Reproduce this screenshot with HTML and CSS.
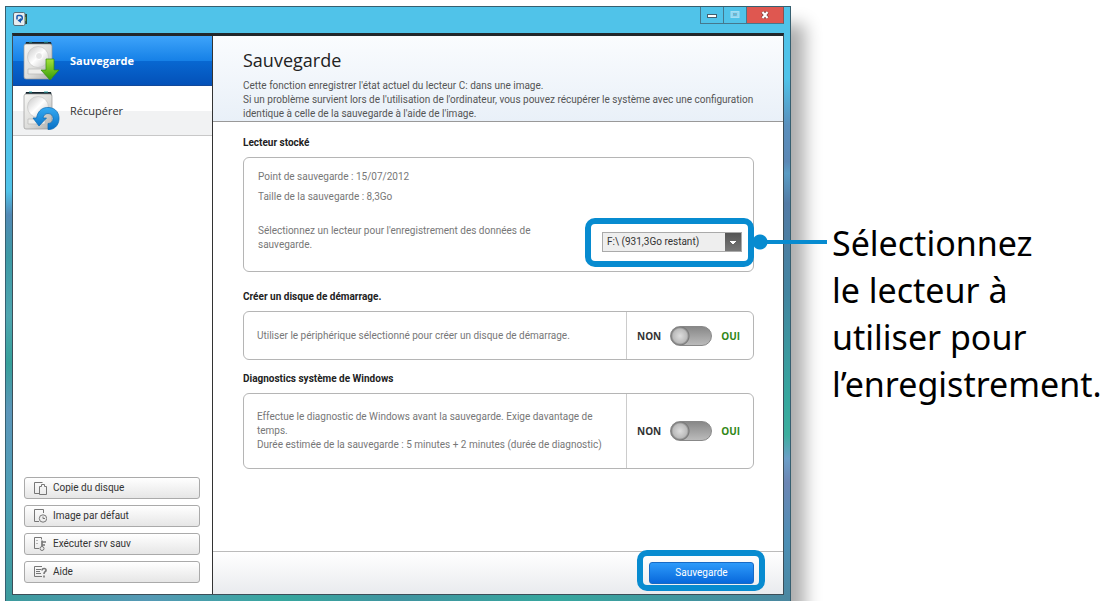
FILE: index.html
```html
<!DOCTYPE html>
<html lang="fr">
<head>
<meta charset="utf-8">
<title>Sauvegarde</title>
<link rel="stylesheet" href="styles.css">
</head>
<body>
<main class="page">
  <section class="window">
    <header class="titlebar">
      <svg class="app-icon" viewBox="0 0 15 15" aria-hidden="true">
        <rect x="12" y="2" width="2" height="10" fill="#2d4b3a"/><path d="M12.500 5v4" stroke="#8bd12f"/>
        <rect x=".5" y=".5" width="11.500" height="13" rx="1.500" fill="#e8edf0" stroke="#58707c"/>
        <path d="M4 7.500V4.500q0-1 1-1h2c3 0 3 4.500.3 5" fill="none" stroke="#1557ae" stroke-width="1.500"/><path d="M8 6v5L4.500 8.500z" fill="#1557ae"/>
      </svg>
      <div class="window-controls">
        <button class="control" aria-label="Réduire"><svg viewBox="0 0 12 12"><rect x="1.500" y="5.500" width="9" height="3" fill="#fff" stroke="#45606e"/></svg></button>
        <button class="control maximize" aria-label="Agrandir" disabled><svg viewBox="0 0 12 12"><rect x="2" y="2.500" width="8" height="6" fill="#8ed8f3" stroke="#a6def2"/><rect x="4.500" y="4.500" width="3" height="2" fill="#54bde5" stroke="#79a8bd" stroke-width=".7"/></svg></button>
        <button class="control close" aria-label="Fermer"><svg viewBox="0 0 12 12"><path d="M3.500 3l5 6M8.500 3l-5 6" stroke="#6b3835" stroke-width="3.500"/><path d="M3.500 3l5 6M8.500 3l-5 6" stroke="#fff" stroke-width="2.200"/></svg></button>
      </div>
    </header>
    <div class="client">
      <aside class="sidebar">
        <nav>
          <a class="nav-item active" href="#sauvegarde">
            <svg class="drive" viewBox="0 0 37 40" aria-hidden="true">
              <defs>
                <linearGradient id="metal" x1="0" y1="0" x2="1" y2="1"><stop stop-color="#f7f7f5"/><stop offset=".55" stop-color="#dcdcda"/><stop offset="1" stop-color="#adadab"/></linearGradient>
                <linearGradient id="disk" x1="0" y1="0" x2="1" y2="1"><stop stop-color="#c6c6c6"/><stop offset=".5" stop-color="#fff"/><stop offset="1" stop-color="#c4c4c4"/></linearGradient>
                <linearGradient id="green" x2="0" y2="1"><stop stop-color="#a5e23b"/><stop offset="1" stop-color="#359b08"/></linearGradient>
                <linearGradient id="blue" x2="0" y2="1"><stop stop-color="#35aaf2"/><stop offset="1" stop-color="#0870c5"/></linearGradient>
              </defs>
              <path d="M3 1h25l1 4H2z" fill="#15252f"/><path d="M6 1h3m12 0h4" stroke="#31a5a7"/>
              <rect x="1" y="3" width="28" height="35" rx="2" fill="url(#metal)" stroke="#989998" stroke-width=".7"/>
              <circle cx="15" cy="16" r="10.500" fill="url(#disk)" stroke="#c5c5c4" stroke-width=".7"/><circle cx="16" cy="15" r="3.500" fill="#e4e4e4" stroke="#fff"/>
              <path d="M5 28h17v5H5z" fill="#ededeb" stroke="#b9b9b8" stroke-width=".7"/>
              <path d="M23 18h8v11h5l-9 10-9-10h5z" fill="url(#green)" stroke="#318b0b" stroke-width=".7"/>
            </svg>
            <span>Sauvegarde</span>
          </a>
          <a class="nav-item" href="#recuperer">
            <svg class="drive" viewBox="0 0 37 40" aria-hidden="true">
              <path d="M3 1h25l1 4H2z" fill="#15252f"/><path d="M6 1h3m12 0h4" stroke="#31a5a7"/>
              <rect x="1" y="3" width="28" height="35" rx="2" fill="url(#metal)" stroke="#989998" stroke-width=".7"/>
              <circle cx="15" cy="16" r="10.500" fill="url(#disk)" stroke="#c5c5c4" stroke-width=".7"/>
              <path d="M5 28h17v5H5z" fill="#ededeb" stroke="#b9b9b8" stroke-width=".7"/>
              <path d="M10 27h3.500C15 19 20 16 26 16.500c7 .5 10.500 6 10 12-.5 6-5 10.500-11 10v-6c3 0 5-2 5-5s-2-5-5-5c-3 0-4.500 2-5 4.500h3.500L16 35z" fill="url(#blue)" stroke="#0869b1" stroke-width=".7"/>
            </svg>
            <span>Récupérer</span>
          </a>
        </nav>
        <div class="tools">
          <button class="tool"><svg viewBox="0 0 13 14"><path d="M5 12.500H.5V1.500h8M5.500 5.500h2v-2h3v2h2v8h-7z"/></svg>Copie du disque</button>
          <button class="tool"><svg viewBox="0 0 13 14"><path d="M5 12.500H.5V.5h9V4"/><circle cx="9" cy="9.500" r="3.700"/><path d="M9 7.500v2h2"/></svg>Image par défaut</button>
          <button class="tool"><svg viewBox="0 0 13 14"><path d="M5 11.500H.5V.5h7v2M2.500 3.500h1m-1 3h1"/><circle cx="8" cy="11.500" r="2"/><path d="M8 9.500v-6M8 5h4m-4 3h3" stroke-width="1.700"/></svg>Exécuter srv sauv</button>
          <button class="tool"><svg viewBox="0 0 13 14"><path d="M8 1.500H.5v10H8M2 4.500h5m-5 2h4m-4 2h5"/><path d="M8 5.500c0-3 4.500-2.500 4 0-.3 1.500-2 1-2 3.500M10 10.500v2" stroke-width="1.600"/></svg>Aide</button>
        </div>
      </aside>
      <div class="content">
        <header class="intro">
          <h1>Sauvegarde</h1>
          <p>Cette fonction enregistrer l'état actuel du lecteur C: dans une image.<br>Si un problème survient lors de l'utilisation de l'ordinateur, vous pouvez récupérer le système avec une configuration<br>identique à celle de la sauvegarde à l'aide de l'image.</p>
        </header>
        <div class="settings">
          <section>
            <h2>Lecteur stocké</h2>
            <div class="card drive-card">
              <p>Point de sauvegarde : 15/07/2012</p>
              <p>Taille de la sauvegarde : 8,3Go</p>
              <div class="drive-row">
                <label for="drive">Sélectionnez un lecteur pour l'enregistrement des données de<br>sauvegarde.</label>
                <div class="select-wrap"><select id="drive"><option>F:\ (931,3Go restant)</option></select></div>
              </div>
            </div>
          </section>
          <section>
            <h2>Créer un disque de démarrage.</h2>
            <div class="card option-card">
              <p>Utiliser le périphérique sélectionné pour créer un disque de démarrage.</p>
              <label class="switch"><span>NON</span><input type="checkbox" role="switch" aria-label="Créer un disque de démarrage"><span class="yes">OUI</span></label>
            </div>
          </section>
          <section>
            <h2>Diagnostics système de Windows</h2>
            <div class="card option-card tall">
              <p>Effectue le diagnostic de Windows avant la sauvegarde. Exige davantage de<br>temps.<br>Durée estimée de la sauvegarde : 5 minutes + 2 minutes (durée de diagnostic)</p>
              <label class="switch"><span>NON</span><input type="checkbox" role="switch" aria-label="Diagnostics système de Windows"><span class="yes">OUI</span></label>
            </div>
          </section>
        </div>
        <footer class="actions"><div class="save-wrap"><button class="save">Sauvegarde</button></div></footer>
      </div>
    </div>
  </section>
  <aside class="caption">Sélectionnez<br>le lecteur à<br>utiliser pour<br>l’enregistrement.</aside>
</main>
</body>
</html>
```
FILE: styles.css
```css
* { box-sizing: border-box; }
body {
  margin: 0;
  background: #fff;
  color: #222;
  font: 10px/14px Roboto, "Open Sans", sans-serif;
}
h1, h2, p { margin: 0; font-weight: 400; }
button, select { font: inherit; color: inherit; }
.page {
  display: grid;
  grid-template-columns: minmax(0, 1fr) 272px;
  gap: 41px;
  min-height: 100vh;
  padding: 6px 0 0 5px;
  overflow: hidden;
}
.window {
  display: flex;
  flex-direction: column;
  padding: 0 6px 6px;
  border: 1px solid #365f70;
  border-bottom: 0;
  background:
    linear-gradient(90deg, #3c9b9d, #5599b5 18%, #36a79e 35%, #4094a0 50%, #36a79e 70%, #4b87a0) bottom / 100% 6px no-repeat,
    linear-gradient(#50c3e9 31%, #5289b5 35%, #3d9aa5 42%, #4fa6b0 52%, #36a09a 60%, #5c96ba 68%, #4d9fb5 82%, #3c9b9d) left / 6px 100% no-repeat,
    linear-gradient(#50c3e9 12%, #5a8fbc 20%, #5c88b5 26%, #5a9cc4 28%, #537ba5 33%, #4384a0 48%, #36a79e 66%, #3dae9e 72%, #6c9fc8 76%, #6c86b4 80%, #4d8fb5 90%, #4b87a0) right / 6px 100% no-repeat,
    #50c3e9;
  box-shadow: 14px 18px 16px rgba(0, 0, 0, .32);
}
.titlebar { display: flex; justify-content: space-between; height: 26px; background: #50c3e9; }
.app-icon { width: 15px; height: 15px; margin: 5px 0 0 1px; }
.window-controls { display: flex; height: 17px; }
.control {
  display: grid;
  place-items: center;
  width: 23px;
  padding: 0;
  border: 1px solid #45788d;
  border-top: 0;
  border-right: 0;
  background: transparent;
}
.control svg { width: 12px; height: 12px; }
.close { width: 38px; border-right: 1px solid #8b5050; background: #df5750; }
.client {
  display: grid;
  grid-template-columns: 200px minmax(0, 1fr);
  flex: 1;
  border: 1px solid #3c4e58;
  border-top: 3px solid #22272b;
  background: #fff;
}
.sidebar {
  display: flex;
  flex-direction: column;
  justify-content: space-between;
  border-right: 1px solid #333;
}
.nav-item {
  display: flex;
  align-items: center;
  gap: 10px;
  height: 50px;
  padding-left: 10px;
  border-bottom: 1px solid #c8c8c8;
  background: linear-gradient(#fff 50%, #f1f2f3 50%);
  color: #333;
  font-family: "Open Sans", sans-serif;
  font-size: 11px;
  text-decoration: none;
}
.nav-item.active {
  border-color: #12499b;
  background: linear-gradient(#3ea4fa, #1681e7 50%, #0868d2 50%, #0451b8);
  color: #fff;
  font-weight: 700;
}
.drive { width: 37px; height: 40px; }
.tools { display: grid; gap: 6px; padding: 0 12px 11px 11px; }
.tool {
  display: flex;
  align-items: center;
  gap: 6px;
  height: 22px;
  padding: 0 9px;
  border: 1px solid #aaa;
  border-radius: 3px;
  background: linear-gradient(#fff, #e6e6e6);
  color: #333;
}
.tool svg { width: 13px; height: 14px; fill: none; stroke: #777; }
.content { display: flex; flex-direction: column; }
.intro {
  height: 86px;
  padding: 11px 0 0 30px;
  border-bottom: 1px solid #999;
  background: linear-gradient(#fafcfe, #e9f0f8);
  color: #555;
}
.intro h1 {
  margin-bottom: 6px;
  color: #222;
  font-family: "Open Sans", sans-serif;
  font-size: 18px;
  line-height: 26px;
}
.intro p { white-space: nowrap; }
.settings { display: grid; gap: 12px; padding: 14px 29px 0 30px; }
h2 { margin-bottom: 7px; font-size: 10px; font-weight: 700; }
.card { border: 1px solid #b5b5b5; border-radius: 6px; color: #777; }
.drive-card { display: grid; gap: 6px; height: 115px; margin-bottom: 6px; padding: 12px 11px 0 14px; align-content: start; }
.drive-row { display: flex; justify-content: space-between; padding-top: 14px; }
.select-wrap { position: relative; align-self: end; color: #333; }
.select-wrap::before {
  content: "";
  position: absolute;
  inset: -14px -12px -15px -17px;
  border: 6px solid #078bd0;
  border-radius: 10px;
  pointer-events: none;
}
.select-wrap::after {
  content: "";
  position: absolute;
  left: calc(100% + 10px);
  top: 2px;
  width: 75px;
  height: 16px;
  background: radial-gradient(circle at 8px 8px, #078bd0 7px, transparent 8px), linear-gradient(#078bd0, #078bd0) 8px 6px / 67px 4px no-repeat;
}
select {
  appearance: none;
  display: block;
  width: 140px;
  height: 20px;
  padding: 0 20px 0 4px;
  border: 1px solid #aaa;
  border-radius: 0;
  background: conic-gradient(from 315deg at 50% 100%, #fff 90deg, transparent 0) right 5px center / 6px 3px no-repeat, linear-gradient(#555, #777) right / 16px 100% no-repeat, #eee;
}
.option-card { display: grid; grid-template-columns: minmax(0, 1fr) 127px; height: 49px; }
.option-card.tall { height: 76px; }
.option-card p { align-self: center; padding-left: 13px; white-space: nowrap; }
.switch {
  display: flex;
  align-items: center;
  gap: 9px;
  padding: 0 10px;
  border-left: 1px solid #ccc;
  color: #333;
  font-family: "Open Sans", sans-serif;
  font-weight: 700;
}
.yes { color: #318717; }
.switch input {
  appearance: none;
  width: 42px;
  height: 20px;
  margin: 0;
  border: 1px solid #888;
  border-radius: 10px;
  background: radial-gradient(circle at 9px 9px, #ddd 0, #bbb 7px, #777 9px, transparent 10px), linear-gradient(#888, #bbb);
}
.actions {
  display: flex;
  justify-content: flex-end;
  height: 43px;
  margin-top: auto;
  padding: 10px 29px;
  border-top: 1px solid #bbb;
  background: linear-gradient(#fff, #e9ebee);
}
.save-wrap { position: relative; }
.save-wrap::before {
  content: "";
  position: absolute;
  inset: -12px -11px -7px -12px;
  border: 6px solid #078bd0;
  border-radius: 10px;
  pointer-events: none;
}
.save {
  width: 105px;
  height: 22px;
  padding: 0;
  border: 1px solid #176ac5;
  border-radius: 3px;
  background: linear-gradient(#2d9afa, #0868dc);
  color: #fff;
}
.caption { padding-top: 214px; color: #000; font-family: "Noto Sans", sans-serif; font-size: 34px; line-height: 47px; white-space: nowrap; }
```
